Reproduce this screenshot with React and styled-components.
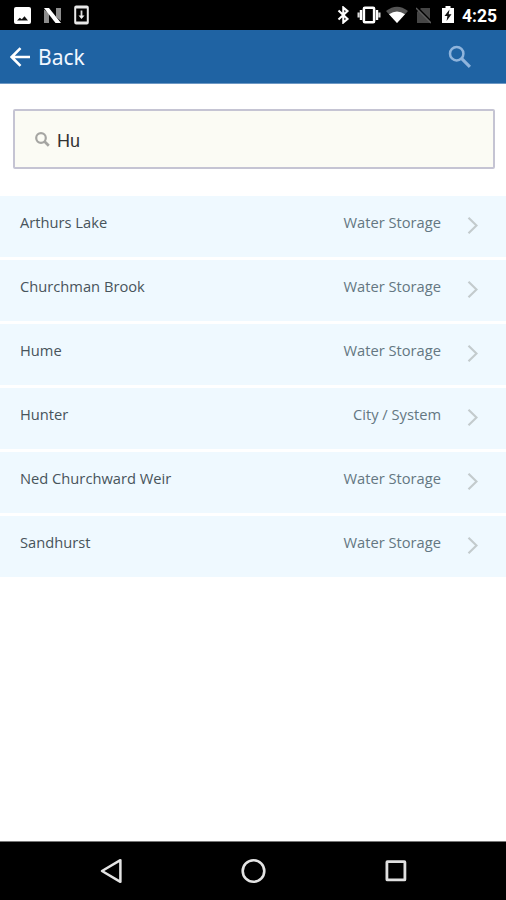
import React from "react";
import styled, { createGlobalStyle } from "styled-components";

const GlobalStyle = createGlobalStyle`
  * {
    box-sizing: border-box;
  }

  body {
    margin: 0;
    background-color: #fff;
    font-family: "Open Sans", "Noto Sans", sans-serif;
  }

  svg {
    display: block;
    flex: none;
  }
`;

const Screen = styled.div`
  display: flex;
  flex-direction: column;
  width: 506px;
  height: 900px;
  overflow: hidden;
`;

const StatusBar = styled.div`
  display: flex;
  align-items: center;
  justify-content: space-between;
  height: 30px;
  padding: 0 9px 0 14px;
  background-color: #000;
`;

const StatusGroup = styled.div`
  display: flex;
  align-items: center;
`;

const StatusIcon = styled.svg`
  margin-right: ${({ $gap }) => $gap}px;
`;

const Clock = styled.span`
  width: 35px;
  color: #fff;
  font: 700 17.5px/30px Roboto, sans-serif;
  white-space: nowrap;
  padding-top: 2px;
`;

const Header = styled.header`
  display: flex;
  align-items: center;
  justify-content: space-between;
  height: 54px;
  padding: 0 34px 0 10px;
  border-bottom: 1px solid #6d98c4;
  background-color: #1f63a3;
`;

const BackButton = styled.button`
  display: flex;
  align-items: center;
  gap: 7px;
  padding: 0;
  border: 0;
  background: none;
  color: #f1f7ff;
  font: 400 21px/30px "Noto Sans", sans-serif;
`;

const Content = styled.main`
  flex: 1;
`;

const SearchBox = styled.label`
  display: flex;
  align-items: center;
  gap: 7px;
  height: 60px;
  margin: 25px 11px 27px 13px;
  padding: 1px 20px 0;
  border: 2px solid #c5c4d3;
  border-radius: 2px;
  background-color: #fbfbf4;
`;

const SearchInput = styled.input`
  flex: 1;
  padding: 2px 0 0;
  border: 0;
  outline: 0;
  background: none;
  color: #333;
  font: 400 18px/24px "Liberation Sans", Arial, sans-serif;
`;

const List = styled.ul`
  display: flex;
  flex-direction: column;
  gap: 3px;
  margin: 0;
  padding: 0;
  list-style: none;
`;

const Row = styled.li`
  display: flex;
  align-items: flex-start;
  height: 61px;
  padding: 16px 28px 0 20px;
  background-color: #eff9ff;
  font-size: 14.7px;
  line-height: 20px;
`;

const Name = styled.span`
  flex: 1;
  color: #48545b;
`;

const Type = styled.span`
  margin-right: 26px;
  color: #647782;
`;

const Chevron = styled.svg`
  margin-top: 4px;
`;

const NavBar = styled.nav`
  display: flex;
  align-items: center;
  justify-content: space-between;
  height: 59px;
  padding: 0 99px 0 100px;
  border-top: 1px solid #777;
  background-color: #000;
`;

const results = [
  { name: "Arthurs Lake", type: "Water Storage" },
  { name: "Churchman Brook", type: "Water Storage" },
  { name: "Hume", type: "Water Storage" },
  { name: "Hunter", type: "City / System" },
  { name: "Ned Churchward Weir", type: "Water Storage" },
  { name: "Sandhurst", type: "Water Storage" },
];

function Notifications() {
  return (
    <StatusGroup>
      <StatusIcon $gap={12} width="17" height="17" viewBox="0 0 17 17">
        <rect width="17" height="17" rx="2" fill="#fff" />
        <path d="m3 13.5 2.8-2.8 2 1.5 2.7-3 3.5 4.3z" fill="#111" />
      </StatusIcon>
      <StatusIcon $gap={12} width="19" height="17" viewBox="0 0 19 17">
        <path d="M1 2.5 6 6v10H1zM13 1h5v13l-5-4z" fill="#8d8d8d" />
        <path d="M1 1h5l12 15h-5.5z" fill="#fff" />
      </StatusIcon>
      <svg width="15" height="20" viewBox="0 0 15 20">
        <rect x="1.2" y="1.5" width="12.6" height="17" rx="1" fill="none" stroke="#e8e8e8" strokeWidth="2" />
        <path d="M1 2.5h13M1 17.5h13" stroke="#e8e8e8" strokeWidth="2" />
        <path d="M7.5 5.5v6" stroke="#ddd" strokeWidth="1.8" />
        <path d="M4.5 10.5h6l-3 3.5z" fill="#eee" />
      </svg>
    </StatusGroup>
  );
}

function SystemStatus() {
  return (
    <StatusGroup>
      <StatusIcon $gap={7} width="13" height="18" viewBox="0 0 13 18">
        <path d="m1.5 4.5 9 8.5L6.3 16.5v-15l4.2 3.6-9 8.4" fill="none" stroke="#fff" strokeWidth="2.1" />
      </StatusIcon>
      <StatusIcon $gap={5} width="24" height="18" viewBox="0 0 24 18">
        <rect x="6.9" y="1.7" width="10.2" height="14.6" rx="1" fill="none" stroke="#fff" strokeWidth="2.5" />
        <path d="M4 4v10M20 4v10" stroke="#fff" strokeWidth="2.4" />
        <path d="M1.6 6.5v5M22.4 6.5v5" stroke="#ddd" strokeWidth="2.2" />
      </StatusIcon>
      <StatusIcon $gap={8} width="22" height="18" viewBox="0 0 22 18">
        <path d="M0 5Q11-3.5 22 5L11 17z" fill="#555" />
        <path d="M3 8.3Q11 2.6 19 8.3L11 17z" fill="#fff" />
      </StatusIcon>
      <StatusIcon $gap={11} width="15" height="18" viewBox="0 0 15 18">
        <path d="M5 2h9v15H1V6z" fill="#464646" />
        <path d="m1 1.2 14 14" stroke="#000" strokeWidth="1.8" />
        <path d="m0 2 15 15" stroke="#5c5c5c" strokeWidth="1.5" />
      </StatusIcon>
      <StatusIcon $gap={8} width="12" height="18" viewBox="0 0 12 18">
        <path d="M0 2h3.5V0h5v2H12v15H0z" fill="#fff" />
        <path d="M7.5 3.5 2.5 10H5.4l-.8 5L9.5 8.2H6.7z" fill="#111" />
      </StatusIcon>
      <Clock>4:25</Clock>
    </StatusGroup>
  );
}

function ResultRow({ name, type }) {
  return (
    <Row>
      <Name>{name}</Name>
      <Type>{type}</Type>
      <Chevron width="11" height="18" viewBox="0 0 11 18">
        <path d="m1.5 1.8 8 7.7-8 7.7" fill="none" stroke="#c3cbcd" strokeWidth="2.2" />
      </Chevron>
    </Row>
  );
}

export default function App() {
  return (
    <Screen>
      <GlobalStyle />
      <StatusBar>
        <Notifications />
        <SystemStatus />
      </StatusBar>
      <Header>
        <BackButton>
          <svg width="21" height="20" viewBox="0 0 21 20">
            <path d="M20 10H2M10.5 1.2 1.7 10l8.8 8.8" fill="none" stroke="#fff" strokeWidth="2.6" />
          </svg>
          Back
        </BackButton>
        <svg width="24" height="24" viewBox="0 0 24 24">
          <circle cx="8.7" cy="8.7" r="6.7" fill="none" stroke="#8fb4dc" strokeWidth="2.5" />
          <path d="m13.7 13.7 8.2 8.2" stroke="#8fb4dc" strokeWidth="3.1" />
        </svg>
      </Header>
      <Content>
        <SearchBox>
          <svg width="15" height="15" viewBox="0 0 15 15">
            <circle cx="6" cy="6" r="4.8" fill="none" stroke="#a5a5a2" strokeWidth="2.2" />
            <path d="m9.5 9.5 4.3 4.3" stroke="#a5a5a2" strokeWidth="2.7" />
          </svg>
          <SearchInput type="text" defaultValue="Hu" />
        </SearchBox>
        <List>
          {results.map((result) => (
            <ResultRow key={result.name} {...result} />
          ))}
        </List>
      </Content>
      <NavBar>
        <svg width="22" height="26" viewBox="0 0 22 26">
          <path d="M20.4 2.2v21.6L2 13z" fill="none" stroke="#e4e4e4" strokeWidth="2.5" strokeLinejoin="round" />
        </svg>
        <svg width="26" height="26" viewBox="0 0 26 26">
          <circle cx="12.5" cy="13" r="10.8" fill="none" stroke="#e4e4e4" strokeWidth="2.6" />
        </svg>
        <svg width="22" height="22" viewBox="0 0 22 22">
          <rect x="1.9" y="1.7" width="18" height="18.2" rx="0.5" fill="none" stroke="#e0e0e0" strokeWidth="2.8" />
        </svg>
      </NavBar>
    </Screen>
  );
}
